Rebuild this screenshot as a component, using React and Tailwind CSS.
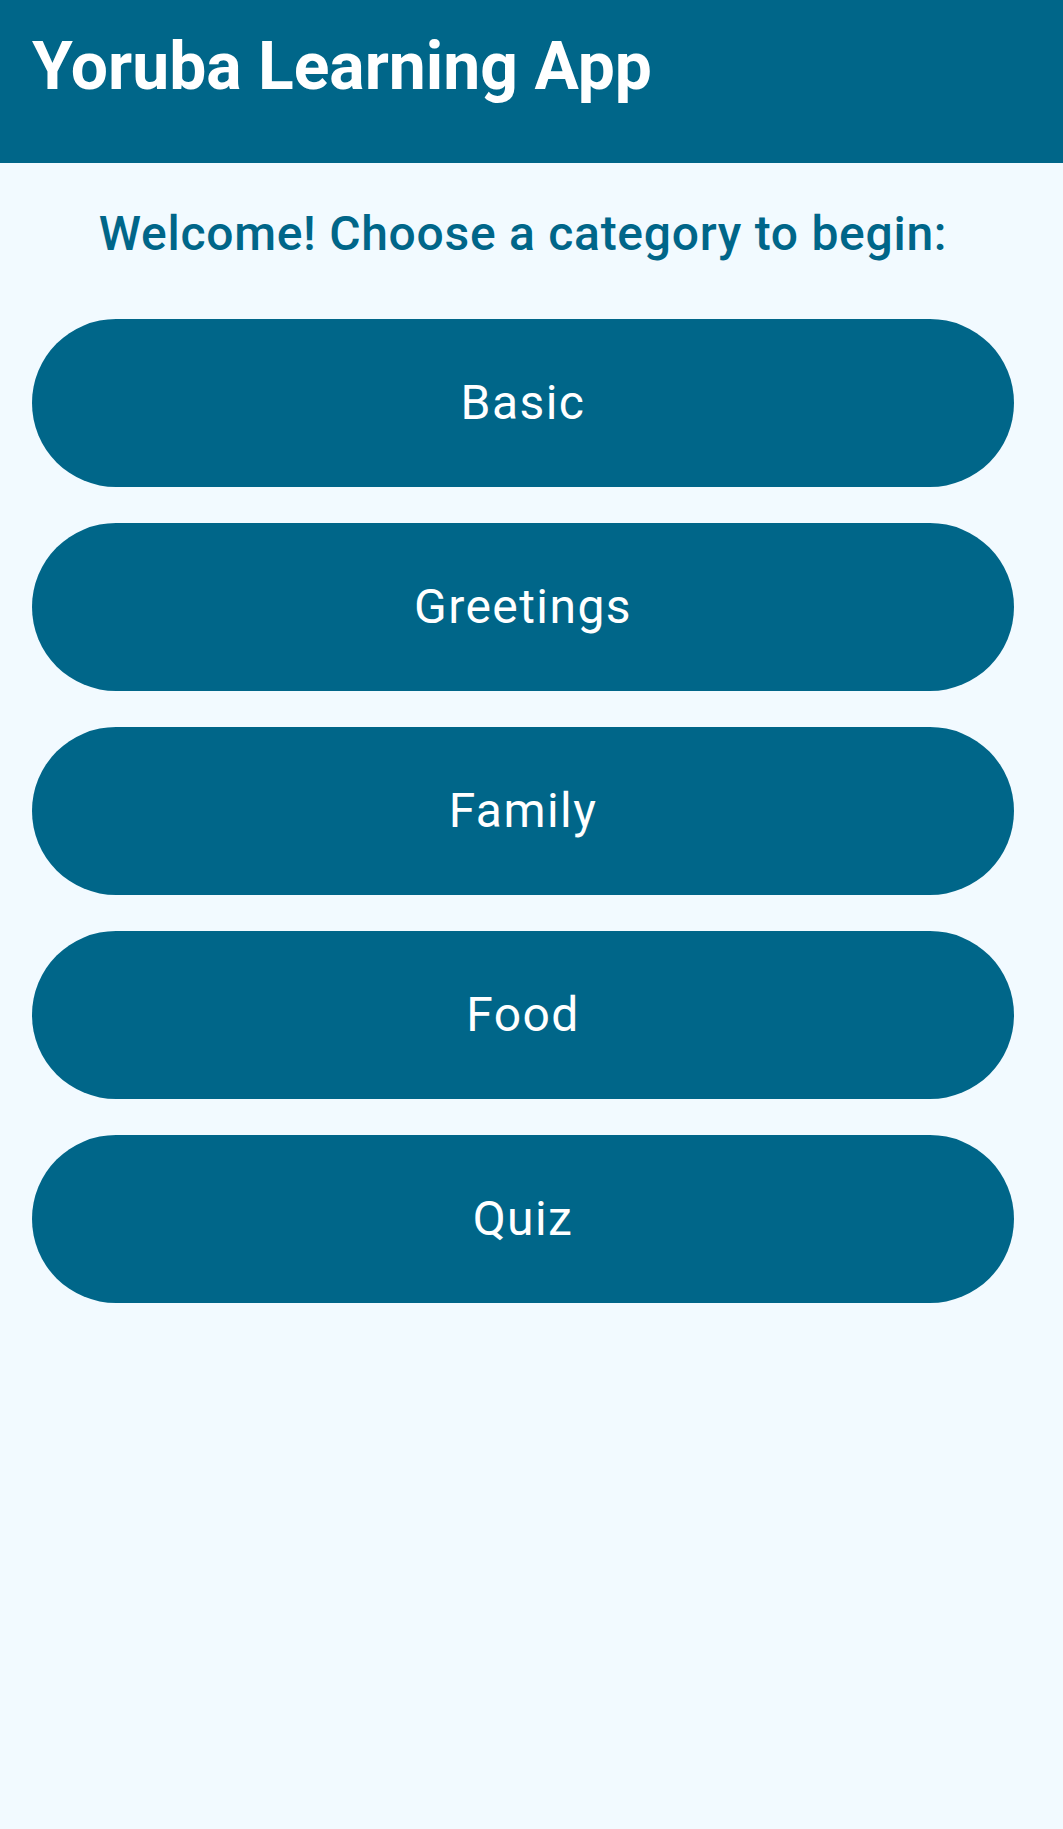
const CATEGORIES = ['Basic', 'Greetings', 'Family', 'Food', 'Quiz'];

export default function App() {
  return (
    <div className="min-h-[1829px] bg-[#f2faff]" style={{ fontFamily: 'Roboto, "Noto Sans", sans-serif' }}>
      {/* top bar */}
      <header className="h-[163px] bg-[#006689] pl-8 pt-[34px]">
        <h1 className="text-[66px] font-bold leading-none text-white">Yoruba Learning App</h1>
      </header>

      <main className="pl-8 pr-[49px]">
        <h2 className="mt-[47px] text-center text-[48px] font-medium leading-none tracking-[0.015em] text-[#006689]">
          Welcome! Choose a category to begin:
        </h2>

        <div className="mt-[61px] flex flex-col gap-9">
          {CATEGORIES.map((c) => (
            <button
              key={c}
              className="flex h-[168px] w-full items-center justify-center rounded-full bg-[#006689] text-[48px] font-normal tracking-[0.03em] text-white"
            >
              {c}
            </button>
          ))}
        </div>
      </main>
    </div>
  );
}
